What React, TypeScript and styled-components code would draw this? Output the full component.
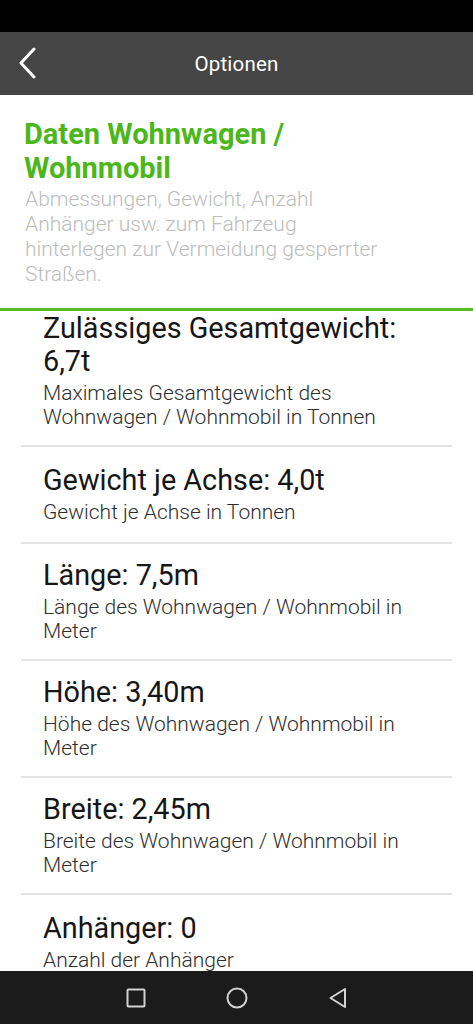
import React, {useEffect, useRef} from 'react';
import styled, {createGlobalStyle} from 'styled-components';

type Option = {
    title: string;
    hint: string;
};

const options: Option[] = [
    {title: 'Zulässiges Gesamtgewicht: 6,7t', hint: 'Maximales Gesamtgewicht des Wohnwagen / Wohnmobil in Tonnen'},
    {title: 'Gewicht je Achse: 4,0t', hint: 'Gewicht je Achse in Tonnen'},
    {title: 'Länge: 7,5m', hint: 'Länge des Wohnwagen / Wohnmobil in Meter'},
    {title: 'Höhe: 3,40m', hint: 'Höhe des Wohnwagen / Wohnmobil in Meter'},
    {title: 'Breite: 2,45m', hint: 'Breite des Wohnwagen / Wohnmobil in Meter'},
    {title: 'Anhänger: 0', hint: 'Anzahl der Anhänger'},
];

const App = () => {
    const listRef = useRef<HTMLDivElement>(null);

    // the list is shown slightly scrolled, as in the screenshot
    useEffect(() => {
        if (listRef.current) listRef.current.scrollTop = 14;
    }, []);

    return (
        <Screen>
            <GlobalStyle/>
            <StatusBar/>
            <AppBar>
                <BackButton aria-label="Zurück">
                    <svg width="20" height="32" viewBox="0 0 20 32" fill="none">
                        <path d="M16 2 L3 16 L16 30" stroke="#fff" strokeWidth="3" strokeLinecap="round" strokeLinejoin="round"/>
                    </svg>
                </BackButton>
                <AppTitle>Optionen</AppTitle>
            </AppBar>

            <Intro>
                <IntroTitle>Daten Wohnwagen /<br/>Wohnmobil</IntroTitle>
                <IntroText>
                    Abmessungen, Gewicht, Anzahl<br/>
                    Anhänger usw. zum Fahrzeug<br/>
                    hinterlegen zur Vermeidung gesperrter<br/>
                    Straßen.
                </IntroText>
            </Intro>
            <Accent/>

            <List ref={listRef}>
                {options.map(o => (
                    <Item key={o.title}>
                        <ItemTitle>{o.title}</ItemTitle>
                        <ItemHint>{o.hint}</ItemHint>
                    </Item>
                ))}
            </List>

            <NavBar>
                <svg width="20" height="20" viewBox="0 0 20 20" fill="none">
                    <rect x="1.5" y="1.5" width="17" height="17" rx="1" stroke="#d2d2d2" strokeWidth="2"/>
                </svg>
                <svg width="22" height="22" viewBox="0 0 22 22" fill="none">
                    <circle cx="11" cy="11" r="9.5" stroke="#d2d2d2" strokeWidth="2"/>
                </svg>
                <svg width="20" height="22" viewBox="0 0 20 22" fill="none">
                    <path d="M17 2 L2.5 11 L17 20 Z" stroke="#d2d2d2" strokeWidth="2" strokeLinejoin="round"/>
                </svg>
            </NavBar>
        </Screen>
    );
};

export default App;

const GlobalStyle = createGlobalStyle`
  html, body {
    margin: 0;
    padding: 0;
    background: #ffffff;
  }
  body {
    font-family: Roboto, "Noto Sans", "Liberation Sans", sans-serif;
  }
`;

const Screen = styled.div`
  width: 473px;
  height: 1024px;
  display: flex;
  flex-direction: column;
  overflow: hidden;
  background: #fff;
`;

const StatusBar = styled.div`
  height: 32px;
  flex-shrink: 0;
  background: #000;
`;

const AppBar = styled.div`
  height: 63px;
  flex-shrink: 0;
  background: #454545;
  display: flex;
  align-items: center;
  justify-content: center;
  position: relative;
`;

const BackButton = styled.button`
  position: absolute;
  left: 18px;
  top: 15px;
  border: none;
  background: none;
  padding: 0;
  display: flex;
`;

const AppTitle = styled.div`
  color: #fff;
  font-size: 20.5px;
  font-weight: 400;
  letter-spacing: 0.2px;
`;

const Intro = styled.div`
  flex-shrink: 0;
  padding: 22px 24px 21px 24px;
  display: flex;
  flex-direction: column;
  gap: 2px;
`;

const IntroTitle = styled.div`
  color: #4bb71b;
  font-size: 29px;
  font-weight: 700;
  line-height: 34px;
`;

const IntroText = styled.div`
  color: #bcbcbc;
  font-size: 21px;
  font-weight: 300;
  line-height: 25px;
  padding-left: 1px;
`;

const Accent = styled.div`
  height: 3px;
  flex-shrink: 0;
  background: #57bb22;
`;

const List = styled.div`
  flex: 1;
  overflow: hidden;
  padding: 0 21px;
`;

const Item = styled.div`
  box-sizing: border-box;
  min-height: 97px;
  padding: 15px 22px 16px 22px;
  border-bottom: 2px solid #e4e4e4;
  display: flex;
  flex-direction: column;
  justify-content: center;
  gap: 3px;
`;

const ItemTitle = styled.div`
  color: #161616;
  font-size: 28.8px;
  font-weight: 400;
  line-height: 33px;
`;

const ItemHint = styled.div`
  color: #2e2e2e;
  font-size: 21px;
  font-weight: 300;
  line-height: 24px;
`;

const NavBar = styled.div`
  height: 53px;
  flex-shrink: 0;
  background: #1b1b1b;
  display: flex;
  align-items: center;
  justify-content: center;
  gap: 80px;
`;
